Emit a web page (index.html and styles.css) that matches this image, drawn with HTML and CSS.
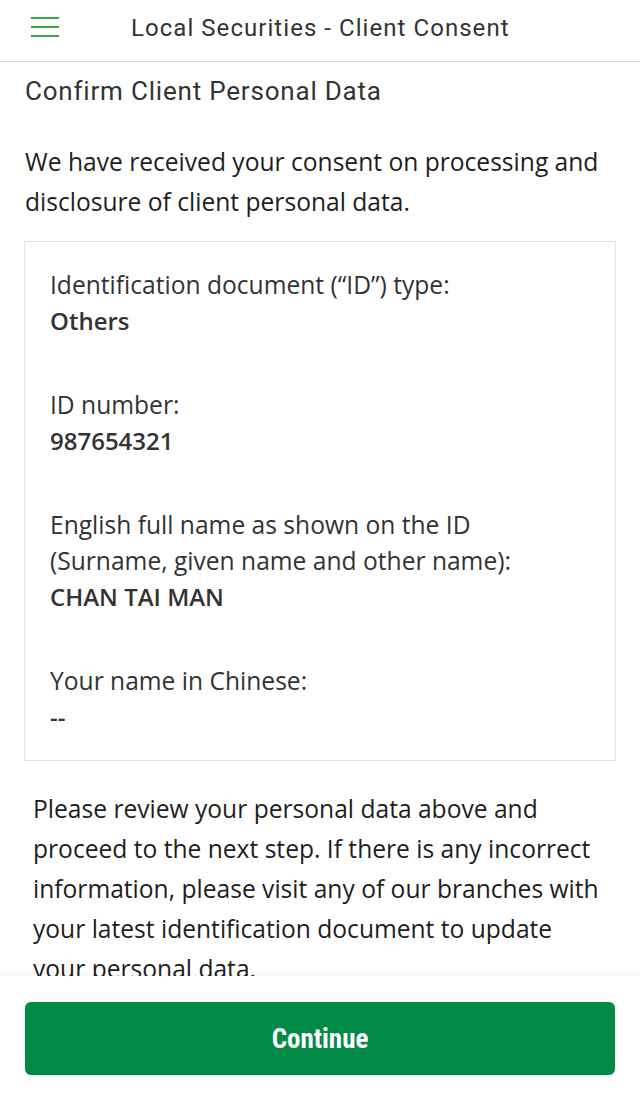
FILE: index.html
```html
<!DOCTYPE html>
<html lang="en">
<head>
<meta charset="utf-8">
<title>Local Securities - Client Consent</title>
<link rel="stylesheet" href="styles.css">
</head>
<body>
<header class="topbar">
  <button class="menu" aria-label="Menu">
    <svg width="28" height="20" viewBox="0 0 28 20"><path d="M0 1h28M0 10h28M0 19h28" stroke="#3aa64a" stroke-width="2" fill="none"/></svg>
  </button>
  <h1 class="title">Local Securities - Client Consent</h1>
</header>
<main class="content">
  <h2 class="heading">Confirm Client Personal Data</h2>
  <p class="intro">We have received your consent on processing and disclosure of client personal data.</p>
  <section class="card">
    <div class="field">
      <div class="label">Identification document (“ID”) type:</div>
      <div class="value">Others</div>
    </div>
    <div class="field">
      <div class="label">ID number:</div>
      <div class="value">987654321</div>
    </div>
    <div class="field">
      <div class="label">English full name as shown on the ID (Surname, given name and other name):</div>
      <div class="value">CHAN TAI MAN</div>
    </div>
    <div class="field">
      <div class="label">Your name in Chinese:</div>
      <div class="value">--</div>
    </div>
  </section>
  <p class="note">Please review your personal data above and proceed to the next step. If there is any incorrect information, please visit any of our branches with your latest identification document to update your personal data.</p>
</main>
<footer class="footer">
  <button class="continue">Continue</button>
</footer>
</body>
</html>
```
FILE: styles.css
```css
* { box-sizing: border-box; }
html, body { margin: 0; padding: 0; background: #fff; }
body { font-family: "Open Sans", "Noto Sans", sans-serif; color: #222; }

.topbar {
  height: 62px;
  border-bottom: 1px solid #d6d6d6;
  display: flex;
  align-items: center;
}
.menu {
  border: 0; background: none; padding: 0;
  margin-left: 31px; margin-top: -8px;
  width: 28px; height: 20px;
  display: flex;
}
.title {
  margin: -6px 0 0 72px;
  font-family: Roboto, "Noto Sans", sans-serif;
  font-weight: 400;
  font-size: 24px;
  letter-spacing: 1.05px;
  color: #333;
}

.content { padding: 0 24px 140px 24px; }
.heading {
  margin: 11px 0 0 1px;
  font-family: Roboto, "Noto Sans", sans-serif;
  font-weight: 400;
  font-size: 26px;
  letter-spacing: 0.8px;
  line-height: 36px;
  color: #333;
}
.intro {
  margin: 33px 0 0 1px;
  font-size: 24.6px;
  line-height: 40px;
  color: #1e1e1e;
}
.card {
  margin-top: 19px;
  border: 1px solid #e2e2e2;
  padding: 25px 25px 25px 25px;
  display: flex;
  flex-direction: column;
  gap: 48px;
}
.field { font-size: 24.6px; line-height: 36px; color: #333; }
.value { font-size: 24px; font-weight: 600; line-height: 36px; }
.note {
  margin: 28px 10px 0 9px;
  font-size: 24.6px;
  line-height: 40px;
  color: #1e1e1e;
}
.footer {
  position: fixed;
  left: 0; right: 0; bottom: 0;
  height: 124px;
  background: #fff;
  box-shadow: 0 -3px 8px rgba(0,0,0,0.04);
  padding: 26px 25px 0 25px;
}
.continue {
  width: 100%;
  height: 73px;
  border: 0;
  border-radius: 6px;
  background: #008a46;
  color: #fff;
  font-family: "Liberation Sans Narrow", "Roboto Condensed", Roboto, sans-serif;
  font-weight: 700;
  font-size: 27px;
}
```
